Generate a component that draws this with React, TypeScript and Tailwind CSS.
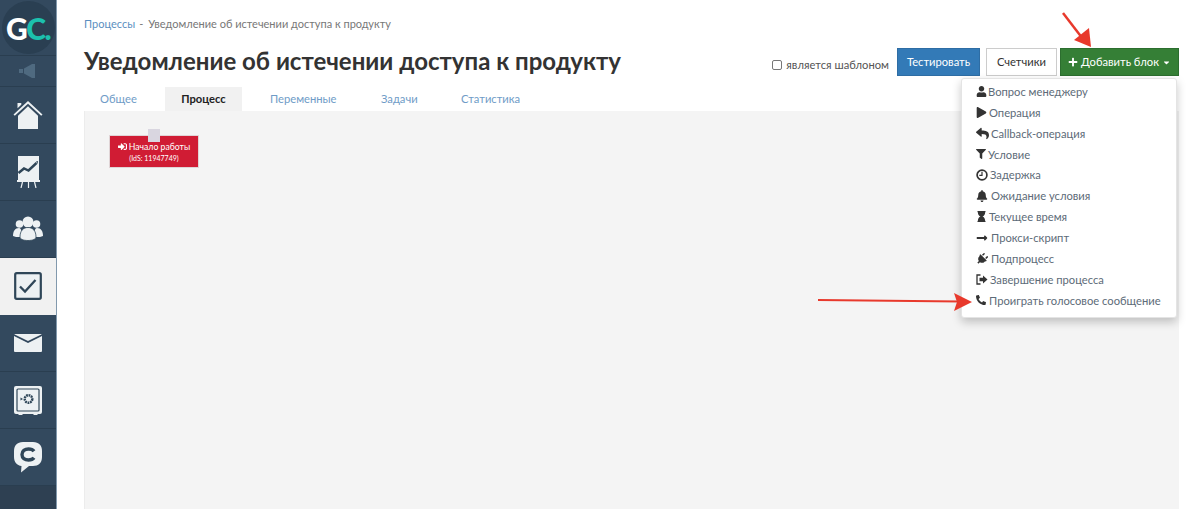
import React from "react";
import { FaUser, FaPlay, FaReply, FaFilter, FaBell, FaHourglass, FaLongArrowAltRight, FaPlug, FaPhone, FaSignInAlt, FaPlus, FaCaretDown } from "react-icons/fa";

const font = "font-['Lato','Open_Sans',sans-serif]";

function Home() {
  return (
    <svg width="30" height="28" viewBox="0 0 30 28" fill="#edf1f3">
      <path d="M.5 13.500 15 0l14.500 13.500-1.300 1.300L15 2.700 1.800 14.800z" />
      <path d="M4.500 2h3.800v1.800L4.500 7.300z" />
      <path d="M5 14.700 15 5.300l10 9.400V28H5z" />
    </svg>
  );
}
function Chart() {
  return (
    <svg width="23" height="32" viewBox="0 0 23 32">
      <path d="M1 0h21v24H1z" fill="#edf1f3" />
      <path d="M1.500 17 7 12.500l4.500 2L19.500 7" fill="none" stroke="#2f4658" strokeWidth="2.400" />
      <path d="M19 5.500 21 5l-.5 3z" fill="#2f4658" />
      <path d="M5.500 26 4 32M17.500 26l1.500 6M11.500 26v6" stroke="#edf1f3" strokeWidth="1.200" />
      <path d="M0 25h23" stroke="#edf1f3" strokeWidth="2" />
    </svg>
  );
}
function Users() {
  return (
    <svg width="30" height="26" viewBox="0 0 30 26" fill="#edf1f3">
      <circle cx="15" cy="6" r="5.500" />
      <circle cx="6.500" cy="8" r="3.800" />
      <circle cx="23.500" cy="8" r="3.800" />
      <path d="M0 20c0-5 2-8 6-8 3 0 2.500 6 2.500 9L3 21z" />
      <path d="M30 20c0-5-2-8-6-8-3 0-2.500 6-2.500 9l5.500 0z" />
      <path d="M7 21c0-6 3-9.500 8-9.500s8 3.500 8 9.500c0 2-3 3.500-8 3.500S7 23 7 21z" stroke="#2f4658" strokeWidth=".8" />
    </svg>
  );
}
function Task() {
  return (
    <svg width="28" height="28" viewBox="0 0 28 28">
      <rect x="1.200" y="1.200" width="25.600" height="25.600" rx="1.500" fill="#edf1f3" stroke="#2f4658" strokeWidth="2.200" />
      <path d="M6 14.500 11 19.500 21.500 8" fill="none" stroke="#2f4658" strokeWidth="2.300" />
    </svg>
  );
}
function Mail() {
  return (
    <svg width="28" height="18" viewBox="0 0 28 18">
      <path d="M0 2 14 9 28 2V17a1 1 0 0 1-1 1H1a1 1 0 0 1-1-1z" fill="#edf1f3" />
      <path d="M1 0h26l.8.300L14 7 .2.300z" fill="#edf1f3" />
    </svg>
  );
}
function Safe() {
  return (
    <svg width="28" height="29" viewBox="0 0 28 29">
      <path d="M2 0h24a2 2 0 0 1 2 2v24a2 2 0 0 1-2 2h-2l-1 1h-3l-1-1H9l-1 1H5l-1-1H2a2 2 0 0 1-2-2V2a2 2 0 0 1 2-2z" fill="#edf1f3" />
      <rect x="3" y="3" width="22" height="22" rx="1" fill="#edf1f3" stroke="#2f4658" strokeWidth="1.200" />
      <circle cx="14.500" cy="13" r="3.800" fill="none" stroke="#2f4658" strokeWidth="2.400" strokeDasharray="1.800 .7" />
      <path d="M6.500 11.500 9 13l-2.500 1.500z" fill="#2f4658" />
    </svg>
  );
}
function Chat() {
  return (
    <svg width="28" height="31" viewBox="0 0 28 31">
      <path d="M9 0h10c6 0 9 3.500 9 9v6c0 6-3.500 9-9 9h-4l-8 6.500.500-6.500C3 23.500 0 20 0 15V9c0-5.500 3-9 9-9z" fill="#edf1f3" />
      <path d="M20 9.200C19 7.800 17 7 14.500 7 10.800 7 8 9 8 12.500S10.800 18 14.500 18c2.500 0 4.500-.8 5.500-2.200" fill="none" stroke="#2f4658" strokeWidth="3.400" />
    </svg>
  );
}
function Clock() {
  return (
    <svg width="12" height="12" viewBox="0 0 12 12" fill="none" stroke="#333">
      <circle cx="6" cy="6" r="4.900" strokeWidth="1.700" />
      <path d="M6 2.800V6.300H3.300" strokeWidth="1.200" />
    </svg>
  );
}
function Logout() {
  return (
    <svg width="12" height="11" viewBox="0 0 12 11" fill="none" stroke="#333" strokeWidth="1.300">
      <path d="M4.500 1H1v9h3.500" />
      <path d="M3.500 3.800h3.500V1.500l4.500 4-4.500 4V7.200H3.500z" fill="#333" stroke="none" />
    </svg>
  );
}

const sideItems = [
  { icon: <Home /> },
  { icon: <Chart /> },
  { icon: <Users /> },
  { icon: <Task />, active: true },
  { icon: <Mail /> },
  { icon: <Safe /> },
  { icon: <Chat /> },
];

const menu: [React.ReactNode, string, string][] = [
  [<FaUser size={11} />, "Вопрос менеджеру", "w-[12px]"],
  [<FaPlay size={11} />, "Операция", "w-[13px]"],
  [<FaReply size={13} />, "Callback-операция", "w-[15px]"],
  [<FaFilter size={10} />, "Условие", "w-[12px]"],
  [<Clock />, "Задержка", "w-[14px]"],
  [<FaBell size={12} />, "Ожидание условия", "w-[15px]"],
  [<FaHourglass size={11} />, "Текущее время", "w-[13px]"],
  [<FaLongArrowAltRight size={12} />, "Прокси-скрипт", "w-[15px]"],
  [<FaPlug size={12} className="rotate-45" />, "Подпроцесс", "w-[15px]"],
  [<Logout />, "Завершение процесса", "w-[14px]"],
  [<FaPhone size={10} className="-scale-x-100" />, "Проиграть голосовое сообщение", "w-[13px]"],
];

export default function App() {
  return (
    <div className={`relative flex h-[509px] w-[1200px] overflow-hidden bg-white ${font}`}>
      <aside className="flex h-full w-[57px] shrink-0 flex-col border-r border-r-[#8299ad] bg-[#33495e]">
        <div className="flex h-[56px] shrink-0 items-center justify-center border-b border-b-[#2a3e50]">
          <div className="flex h-[53px] w-[53px] items-center justify-center rounded-full bg-[#2a3f52] text-[30px] font-black leading-none tracking-[-1.500px]">
            <span className="text-white">G</span>
            <span className="text-[#1cc0ad]">C.</span>
          </div>
        </div>
        <div className="flex h-[31px] shrink-0 items-center justify-center border-b border-b-[#2a3e50]">
          <svg width="18" height="14" viewBox="0 0 18 14" fill="#4f6a80">
            <path d="M0 5h4v4H0zM5 4.500 13 0h3v14h-3L5 9.500z" />
          </svg>
        </div>
        {sideItems.map((it, i) => (
          <div
            key={i}
            className={`flex h-[57px] shrink-0 items-center justify-center border-b ${
              it.active ? "border-b-[#f1f1f1] bg-[#f1f1f1]" : "border-b-[#2a3e50]"
            }`}
          >
            {it.icon}
          </div>
        ))}
        <div className="flex-1 bg-[#2e4052]" />
      </aside>

      <main className="flex min-w-0 flex-1 flex-col pl-[27px] pr-[21px]">
        <div className="mt-[16px] flex h-[14px] items-center gap-[4px] text-[11px] leading-none text-[#777]">
          <span className="text-[#5b8fc0]">Процессы</span>
          <span>-</span>
          <span className="ml-[1px]">Уведомление об истечении доступа к продукту</span>
        </div>

        <div className="mt-[16px] flex h-[41px] items-start justify-between">
          <h1 className="text-[24px] font-bold leading-[30px] text-[#333]">
            Уведомление об истечении доступа к продукту
          </h1>
          <div className="mt-[2px] flex items-start">
            <label className="mt-[10px] mr-[8px] flex items-center gap-[4px] text-[11.200px] leading-[14px] text-[#555]">
              <span className="h-[10px] w-[10px] rounded-[2px] border border-[#777] bg-white" />
              <span>является шаблоном</span>
            </label>
            <button className="h-[28px] w-[83px] border border-[#2e6da4] bg-[#337ab7] text-[11.200px] text-white">Тестировать</button>
            <button className="ml-[6px] h-[28px] w-[71px] border border-[#ccc] bg-white text-[11.200px] text-[#333]">Счетчики</button>
            <button className="ml-[3px] flex h-[28px] w-[119px] items-center justify-center gap-[3px] border border-[#2c6e2f] bg-[#357f36] text-[11.200px] text-white">
              <FaPlus size={10} />
              Добавить блок
              <FaCaretDown size={9} />
            </button>
          </div>
        </div>

        <div className="flex h-[24px] shrink-0 text-[11.200px] leading-[24px] text-[#6f9cc7]">
          <div className="w-[81px] pl-[16px]">Общее</div>
          <div className="w-[77px] bg-[#f1f1f1] text-center font-bold text-[#222]">Процесс</div>
          <div className="w-[111px] pl-[28px]">Переменные</div>
          <div className="w-[80px] pl-[28px]">Задачи</div>
          <div className="pl-[28px]">Статистика</div>
        </div>

        <div className="relative flex-1 border-l border-l-[#ececec] bg-[#f4f4f4]">
          <div className="absolute left-[24px] top-[24px] flex h-[33px] w-[90px] flex-col items-center justify-center border border-[#e0d4d6] bg-[#d01c34] text-white">
            <div className="flex items-center gap-[2px] text-[8.700px] leading-[13px]">
              <FaSignInAlt size={9} />
              Начало работы
            </div>
            <div className="text-[7px] leading-[11px]">(IdS: 11947749)</div>
          </div>
          <div className="absolute left-[63px] top-[18px] h-[13px] w-[12px] bg-[#d9d6e0]" />
        </div>
      </main>

      <div className="absolute left-[961px] top-[78px] flex h-[240px] w-[216px] flex-col rounded-[3px] border border-[#e4e4e4] bg-white pt-[2px] shadow-[0_4px_10px_rgba(0,0,0,0.22)]">
        {menu.map(([icon, label, w]) => (
          <div key={label} className="flex h-[20.900px] items-center whitespace-nowrap pl-[14px] text-[11.200px] leading-none text-[#5d6b78]">
            <span className={`flex shrink-0 items-center text-[#333] ${w}`}>{icon}</span>
            {label}
          </div>
        ))}
      </div>

      <svg className="absolute left-[815px] top-[8px]" width="360" height="310" viewBox="815 8 360 310" fill="#e8392c">
        <path d="M1063 13 1086 43" stroke="#e8392c" strokeWidth="2.500" />
        <path d="M1074 40 1089 28 1091 47z" />
        <path d="M818 300 960 301.500" stroke="#e8392c" strokeWidth="2.200" />
        <path d="M954 293 972 302 954 311 957 302z" />
      </svg>
    </div>
  );
}
